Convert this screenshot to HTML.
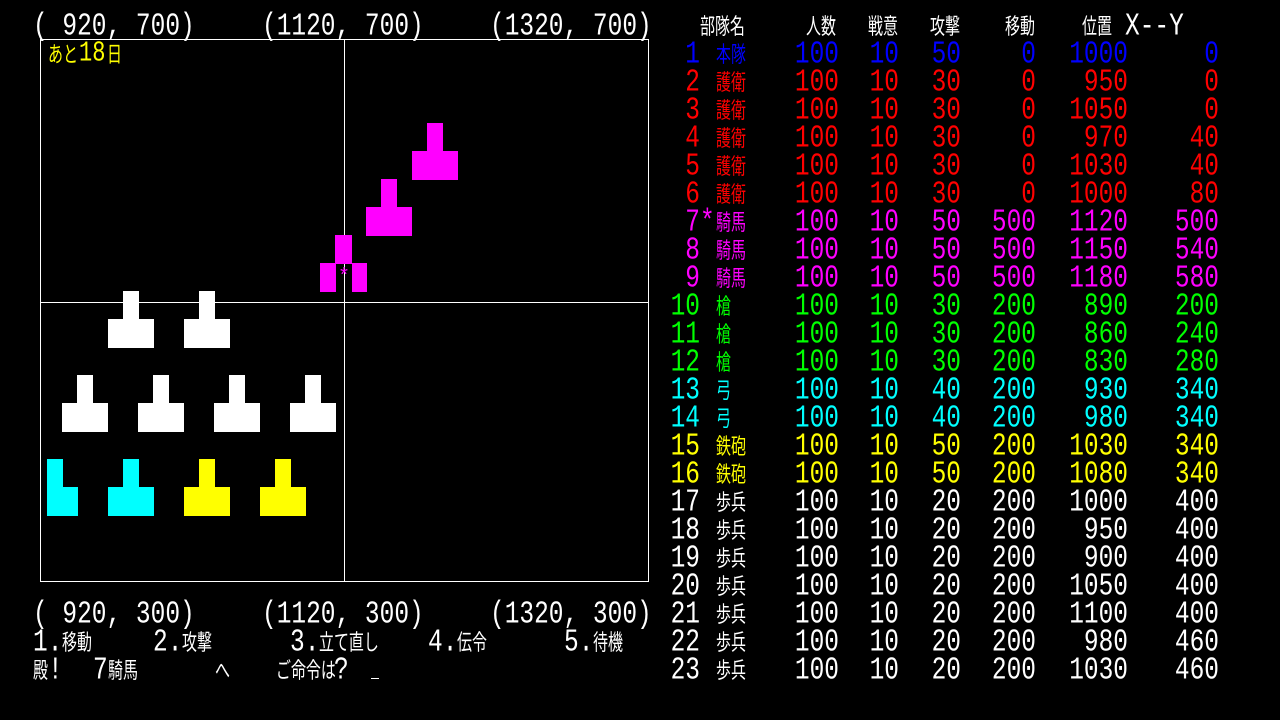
<!DOCTYPE html>
<html><head><meta charset="utf-8"><style>
html,body{margin:0;padding:0;background:#000;width:1280px;height:720px;overflow:hidden;position:relative}
.t{position:absolute;font-family:"Liberation Mono","Noto Sans CJK JP",monospace;font-size:24.5px;line-height:28px;white-space:pre;color:#fff}
.m{transform:translateY(2px) scaleY(1.3);transform-origin:center}
.n{font-family:"Noto Sans CJK JP",sans-serif;font-size:22px;transform:translateY(-1px) scaleX(.68);transform-origin:left center}
.b{position:absolute}
.ln{position:absolute;background:#fff}
</style></head><body>
<div class="ln" style="left:40px;top:39px;width:609px;height:1px"></div>
<div class="ln" style="left:40px;top:581px;width:609px;height:1px"></div>
<div class="ln" style="left:40px;top:39px;width:1px;height:543px"></div>
<div class="ln" style="left:648px;top:39px;width:1px;height:543px"></div>
<div class="ln" style="left:344px;top:39px;width:1px;height:543px"></div>
<div class="ln" style="left:40px;top:302px;width:609px;height:1px"></div>

<div class="t m" style="left:33px;top:12px">( 920, 700)</div>
<div class="t m" style="left:262px;top:12px">(1120, 700)</div>
<div class="t m" style="left:490px;top:12px">(1320, 700)</div>
<div class="t m" style="left:33px;top:600px">( 920, 300)</div>
<div class="t m" style="left:262px;top:600px">(1120, 300)</div>
<div class="t m" style="left:490px;top:600px">(1320, 300)</div>
<div class="t n" style="left:48px;top:40px;color:#ff0">あと</div>
<div class="t m" style="left:79px;top:38px;color:#ff0;font-size:22px">18</div>
<div class="t n" style="left:107px;top:40px;color:#ff0">日</div>

<svg class="b" style="left:0;top:0" width="660" height="600">
<g fill="#f0f">
<rect x="427" y="123" width="16" height="29"/><rect x="412" y="151" width="46" height="29"/>
<rect x="381" y="179" width="16" height="29"/><rect x="366" y="207" width="46" height="29"/>
<rect x="335" y="235" width="17" height="29"/><rect x="320" y="263" width="16" height="29"/><rect x="352" y="263" width="15" height="29"/>
</g>
<text x="344" y="282" fill="#f0f" font-size="20" text-anchor="middle" font-family="Liberation Mono">*</text>
<g fill="#fff">
<rect x="123" y="291" width="16" height="29"/><rect x="108" y="319" width="46" height="29"/>
<rect x="199" y="291" width="16" height="29"/><rect x="184" y="319" width="46" height="29"/>
<rect x="77" y="375" width="16" height="29"/><rect x="62" y="403" width="46" height="29"/>
<rect x="153" y="375" width="16" height="29"/><rect x="138" y="403" width="46" height="29"/>
<rect x="229" y="375" width="16" height="29"/><rect x="214" y="403" width="46" height="29"/>
<rect x="305" y="375" width="16" height="29"/><rect x="290" y="403" width="46" height="29"/>
</g>
<g fill="#0ff">
<rect x="47" y="459" width="16" height="29"/><rect x="47" y="487" width="31" height="29"/>
<rect x="123" y="459" width="16" height="29"/><rect x="108" y="487" width="46" height="29"/>
</g>
<g fill="#ff0">
<rect x="199" y="459" width="16" height="29"/><rect x="184" y="487" width="46" height="29"/>
<rect x="275" y="459" width="16" height="29"/><rect x="260" y="487" width="46" height="29"/>
</g>
</svg>

<div class="t m" style="left:33px;top:628px">1.</div><div class="t n" style="left:62px;top:628px">移動</div>
<div class="t m" style="left:153px;top:628px">2.</div><div class="t n" style="left:182px;top:628px">攻撃</div>
<div class="t m" style="left:290px;top:628px">3.</div><div class="t n" style="left:319px;top:628px">立て直し</div>
<div class="t m" style="left:428px;top:628px">4.</div><div class="t n" style="left:457px;top:628px">伝令</div>
<div class="t m" style="left:564px;top:628px">5.</div><div class="t n" style="left:593px;top:628px">待機</div>
<div class="t n" style="left:33px;top:656px">殿</div>
<div class="t m" style="left:48px;top:656px">!</div>
<div class="t m" style="left:93px;top:656px">7</div><div class="t n" style="left:108px;top:656px">騎馬</div>
<div class="t n" style="left:215px;top:656px">へ</div>
<div class="t n" style="left:276px;top:656px">ご命令は</div>
<div class="t m" style="left:334px;top:656px">?</div>
<div class="ln" style="left:371px;top:678px;width:8px;height:1px"></div>

<div class="t n" style="left:700px;top:12px">部隊名</div>
<div class="t n" style="left:806px;top:12px">人数</div>
<div class="t n" style="left:868px;top:12px">戦意</div>
<div class="t n" style="left:930px;top:12px">攻撃</div>
<div class="t n" style="left:1005px;top:12px">移動</div>
<div class="t n" style="left:1082px;top:12px">位置</div>
<div class="t m" style="left:1125px;top:12px">X--Y</div>

<div id="tb"></div>
<script>
var rows=[
[1,"本隊",100,10,50,0,1000,0,"#00f"],
[2,"護衛",100,10,30,0,950,0,"#f00"],
[3,"護衛",100,10,30,0,1050,0,"#f00"],
[4,"護衛",100,10,30,0,970,40,"#f00"],
[5,"護衛",100,10,30,0,1030,40,"#f00"],
[6,"護衛",100,10,30,0,1000,80,"#f00"],
[7,"騎馬",100,10,50,500,1120,500,"#f0f"],
[8,"騎馬",100,10,50,500,1150,540,"#f0f"],
[9,"騎馬",100,10,50,500,1180,580,"#f0f"],
[10,"槍",100,10,30,200,890,200,"#0f0"],
[11,"槍",100,10,30,200,860,240,"#0f0"],
[12,"槍",100,10,30,200,830,280,"#0f0"],
[13,"弓",100,10,40,200,930,340,"#0ff"],
[14,"弓",100,10,40,200,980,340,"#0ff"],
[15,"鉄砲",100,10,50,200,1030,340,"#ff0"],
[16,"鉄砲",100,10,50,200,1080,340,"#ff0"],
[17,"歩兵",100,10,20,200,1000,400,"#fff"],
[18,"歩兵",100,10,20,200,950,400,"#fff"],
[19,"歩兵",100,10,20,200,900,400,"#fff"],
[20,"歩兵",100,10,20,200,1050,400,"#fff"],
[21,"歩兵",100,10,20,200,1100,400,"#fff"],
[22,"歩兵",100,10,20,200,980,460,"#fff"],
[23,"歩兵",100,10,20,200,1030,460,"#fff"]];
var rights=[700,null,839,899,961,1036,1128,1219],h="";
rows.forEach(function(r,i){var top=40+i*28,c=r[8];
for(var k=0;k<8;k++){
 if(k==1){h+='<div class="t n" style="left:716px;top:'+top+'px;color:'+c+'">'+r[1]+'</div>';continue;}
 h+='<div class="t m" style="right:'+(1280-rights[k])+'px;top:'+top+'px;color:'+c+'">'+r[k]+'</div>';}
 if(i==6)h+='<div class="t m" style="left:700px;top:'+top+'px;color:'+c+'">*</div>';
});
document.getElementById("tb").innerHTML=h;
</script>
</body></html>
